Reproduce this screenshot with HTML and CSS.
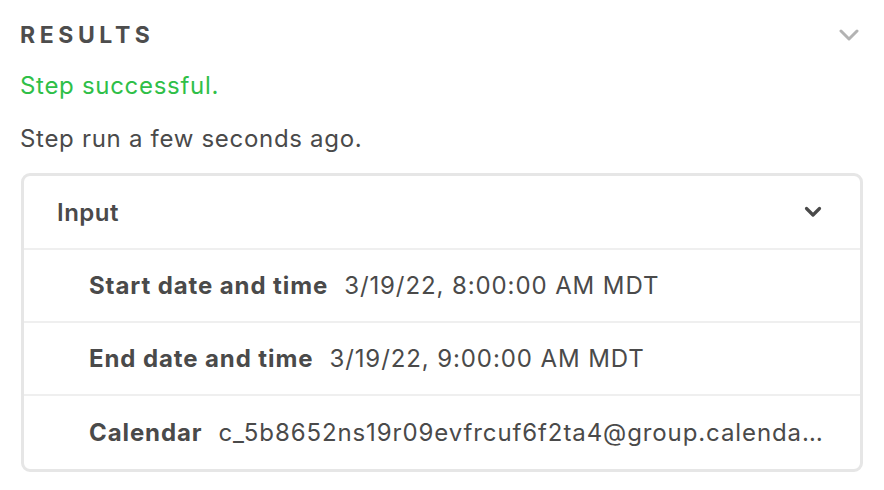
FILE: index.html
```html
<!DOCTYPE html>
<html lang="en">
<head>
    <meta charset="UTF-8">
    <title>Results</title>
    <link rel="stylesheet" href="styles.css">
</head>
<body>
    <div class="results">
        <div class="results-head">
            <h2>Results</h2>
            <svg class="chevron-light" width="20" height="12" viewBox="0 0 20 12">
                <path d="M2 2 L10 10 L18 2" fill="none" stroke="#b3b3b3" stroke-width="3" stroke-linecap="round" stroke-linejoin="round"/>
            </svg>
        </div>
        <p class="status">Step successful.</p>
        <p class="meta">Step run a few seconds ago.</p>

        <div class="card">
            <div class="card-head">
                <span>Input</span>
                <svg width="18" height="12" viewBox="0 0 18 12">
                    <path d="M2.5 2.5 L9 9 L15.5 2.5" fill="none" stroke="#4a4a4a" stroke-width="3.2" stroke-linecap="round" stroke-linejoin="round"/>
                </svg>
            </div>
            <div class="row"><span class="label">Start date and time</span><span class="value">3/19/22, 8:00:00 AM MDT</span></div>
            <div class="row"><span class="label">End date and time</span><span class="value">3/19/22, 9:00:00 AM MDT</span></div>
            <div class="row last"><span class="label">Calendar</span><span class="value">c_5b8652ns19r09evfrcuf6f2ta4@group.calenda…</span></div>
        </div>
    </div>
</body>
</html>
```

FILE: styles.css
```css
body {
    margin: 0;
    font-family: Inter, "Noto Sans", sans-serif;
    color: #4a4a4a;
    background: #fff;
}
.results {
    padding: 20px 21px 0 20px;
}
.results-head {
    display: flex;
    justify-content: space-between;
    align-items: center;
    height: 30px;
}
.results-head h2 {
    margin: 0;
    font-size: 23px;
    font-weight: 700;
    letter-spacing: 4.6px;
    text-transform: uppercase;
    color: #4d4d4d;
}
.chevron-light {
    margin-right: 4px;
}
.status {
    margin: 21px 0 0;
    font-size: 24px;
    line-height: 30px;
    letter-spacing: 0.7px;
    color: #2fbf48;
}
.meta {
    margin: 23px 0 0;
    font-size: 24px;
    line-height: 30px;
    letter-spacing: 0.7px;
    color: #4a4a4a;
}
.card {
    margin-top: 19px;
    margin-left: 1px;
    border: 3px solid #e6e6e6;
    border-radius: 9px;
    overflow: hidden;
}
.card-head {
    display: flex;
    justify-content: space-between;
    align-items: center;
    height: 72px;
    padding: 0 38px 0 33px;
    font-size: 24px;
    font-weight: 600;
    letter-spacing: 0.5px;
    border-bottom: 2px solid #efefef;
}
.row {
    display: flex;
    align-items: center;
    gap: 16px;
    height: 71px;
    padding: 0 14px 0 65px;
    font-size: 24px;
    letter-spacing: 0.9px;
    white-space: nowrap;
    border-bottom: 2px solid #efefef;
}
.row.last {
    height: 73px;
    border-bottom: none;
}
.label {
    font-weight: 700;
}
.value {
    overflow: hidden;
}
```
